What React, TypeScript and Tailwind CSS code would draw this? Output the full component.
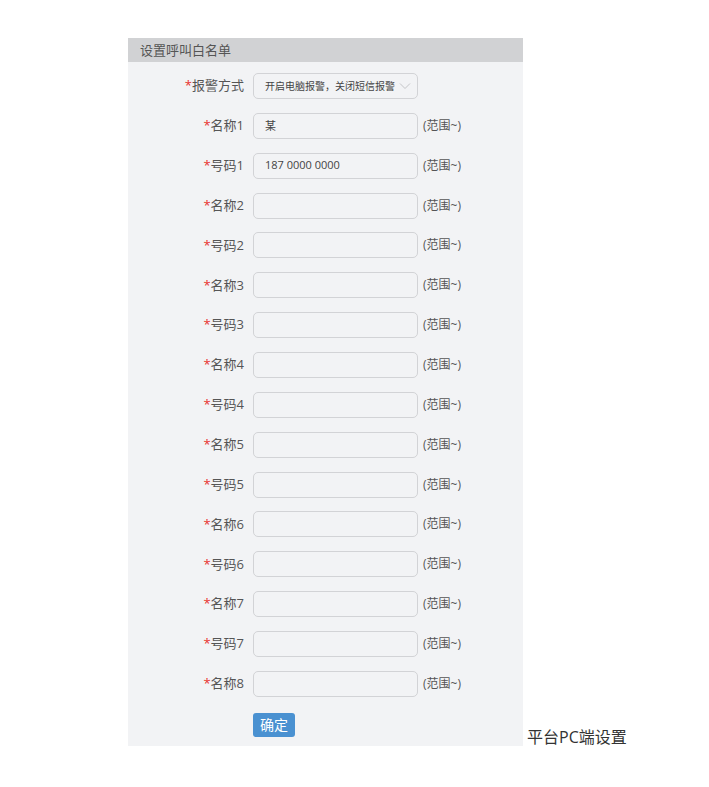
import React from 'react';

const FONT = { fontFamily: '"Open Sans", "Noto Sans CJK SC", sans-serif' };

const rows: { label: string; value?: string }[] = [
  { label: '名称1', value: '某' },
  { label: '号码1', value: '187 0000 0000' },
  { label: '名称2' },
  { label: '号码2' },
  { label: '名称3' },
  { label: '号码3' },
  { label: '名称4' },
  { label: '号码4' },
  { label: '名称5' },
  { label: '号码5' },
  { label: '名称6' },
  { label: '号码6' },
  { label: '名称7' },
  { label: '号码7' },
  { label: '名称8' },
];

const Label: React.FC<{ text: string }> = ({ text }) => (
  <label className="w-[116px] text-right text-[13px] text-[#555] shrink-0">
    <span className="text-[#e8302c]">*</span>
    {text}
  </label>
);

export default function App() {
  return (
    <div className="bg-white pl-[128px] pt-[38px] flex items-end" style={FONT}>
      <div className="w-[395px] bg-[#f2f3f5]">
        <div className="h-[24px] bg-[#d1d2d4] pl-[12px] text-[13px] leading-[24px] text-[#555]">设置呼叫白名单</div>

        <div className="pt-[11px] pb-[9px] flex flex-col gap-[13.87px]">
          {/* alarm mode */}
          <div className="flex items-center h-[26px]">
            <Label text="报警方式" />
            <div className="ml-[9px] w-[165px] h-[26px] border-[1.5px] border-[#d2d3d6] rounded-[5px] flex items-center justify-between pl-[11px] pr-[6px]">
              <span className="text-[10px] text-[#444] whitespace-nowrap">开启电脑报警，关闭短信报警</span>
              <svg width="12" height="8" viewBox="0 0 12 8" fill="none">
                <path d="M1 1.5 L6 6.5 L11 1.5" stroke="#c4c5c8" strokeWidth="1" />
              </svg>
            </div>
          </div>

          {rows.map((r, i) => (
            <div key={i} className="flex items-center h-[26px]">
              <Label text={r.label} />
              <div className="ml-[9px] w-[165px] h-[26px] border-[1.5px] border-[#d2d3d6] rounded-[5px] flex items-center pl-[11px] text-[11px] text-[#444]">
                {r.value}
              </div>
              <span className="ml-[5px] text-[12px] text-[#555]">(范围~)</span>
            </div>
          ))}

          <div className="flex h-[24px] mt-[2px]">
            <button className="ml-[125px] w-[42px] h-[24px] rounded-[3px] bg-[#4a91d1] text-white text-[14px] leading-[24px]">确定</button>
          </div>
        </div>
      </div>
      <div className="ml-[4px] text-[16px] text-[#333] leading-[20px] mb-[-1px]">平台PC端设置</div>
    </div>
  );
}
